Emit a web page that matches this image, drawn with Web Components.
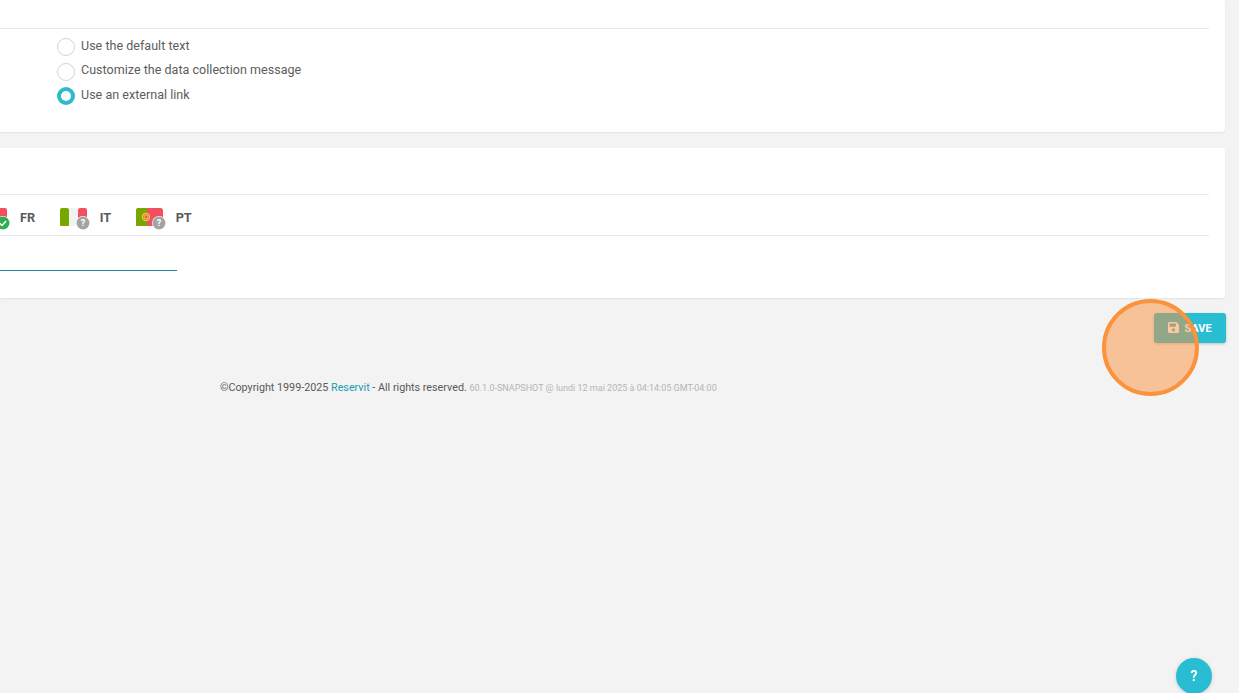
<!DOCTYPE html>
<html><head><meta charset="utf-8">
<style>
html,body{margin:0;padding:0;height:100%;overflow:hidden;background:#f3f3f3;font-family:Roboto,"Liberation Sans",sans-serif;color:#555}
</style></head><body>
<app-page>
  <app-card style="--h:132px;--pt:28px">
    <card-rule></card-rule>
    <radio-list>
      <radio-item>Use the default text</radio-item>
      <radio-item>Customize the data collection message</radio-item>
      <radio-item checked>Use an external link</radio-item>
    </radio-list>
  </app-card>
  <app-card style="--h:150px;--pt:46px;--mt:16px">
    <card-rule></card-rule>
    <lang-tabs>
      <lang-tab flag="fr" state="ok">FR</lang-tab>
      <lang-tab flag="it" state="q">IT</lang-tab>
      <lang-tab flag="pt" state="q">PT</lang-tab>
    </lang-tabs>
    <card-rule></card-rule>
    <url-field></url-field>
  </app-card>
  <save-bar></save-bar>
  <page-footer></page-footer>
</app-page>
<help-button></help-button>
<click-marker></click-marker>
<script>
function def(name, html, init){
  customElements.define(name, class extends HTMLElement{
    constructor(){super();this.attachShadow({mode:'open'}).innerHTML=html;}
    connectedCallback(){ if(init) init(this); }
  });
}
def('app-page',`<style>:host{display:block;width:1225px}</style><slot></slot>`);
def('app-card',`<style>:host{display:block;box-sizing:border-box;height:var(--h);margin-top:var(--mt,0);padding:var(--pt) 16px 0 0;background:#fff;border-radius:0 3px 3px 0;box-shadow:0 1px 2px rgba(0,0,0,.07)}</style><slot></slot>`);
def('card-rule',`<style>:host{display:block;height:1px;background:#e9e9e9}</style>`);
def('radio-list',`<style>:host{display:flex;flex-direction:column;padding:5px 0 0 57px}</style><slot></slot>`);
def('radio-item',`<style>:host{display:flex;align-items:flex-start;height:24.5px;font-size:12.5px;letter-spacing:.03px;color:#5c5c5c;line-height:24px}
.c{box-sizing:border-box;width:18px;height:18px;margin:4px 6px 0 0;border:1px solid #d4d4d4;border-radius:50%;background:#fff}
:host([checked]) .c{border:4px solid #2fb9cd;width:18px;height:18px}
span{display:block;margin-top:-.5px}</style><div class="c"></div><span><slot></slot></span>`);
def('lang-tabs',`<style>:host{display:flex;align-items:center;height:40px;margin-left:-20px;padding-top:5px;box-sizing:border-box}</style><slot></slot>`);
const flags={
 fr:`<rect width="9" height="18.5" fill="#3b5bb5"/><rect x="9" width="9" height="18.5" fill="#f4f4f4"/><rect x="18" width="9" height="18.5" rx="2" fill="#f0505f"/>`,
 it:`<rect width="9" height="18.5" rx="2" fill="#76a800"/><rect x="9" width="9" height="18.5" fill="#f2f2f2"/><rect x="18" width="9" height="18.5" rx="2" fill="#f0505f"/>`,
 pt:`<rect width="27" height="18.5" rx="2.5" fill="#f0505f"/><path d="M2.5 0h8.5v18.5H2.5A2.5 2.5 0 0 1 0 16V2.5A2.5 2.5 0 0 1 2.5 0z" fill="#76a800"/><circle cx="10" cy="9" r="4.2" fill="#e9c24a"/><circle cx="10" cy="9" r="2.6" fill="none" stroke="#d9772f" stroke-width=".8"/><circle cx="10" cy="9" r="1.3" fill="#f0505f"/>`
};
const badges={
 ok:`<circle cx="7" cy="7" r="6.5" fill="#2ead52"/><path d="M3.8 7.2l2.3 2.3 4-4.4" fill="none" stroke="#fff" stroke-width="1.5"/>`,
 q:`<circle cx="7" cy="7" r="6.5" fill="#a3a3a3"/><text x="7" y="10.2" text-anchor="middle" font-family="Roboto,sans-serif" font-size="9" font-weight="700" fill="#fff">?</text>`
};
def('lang-tab',`<style>:host{display:flex;align-items:center;margin-right:24.6px;font-size:12.7px;font-weight:700;color:#5a5a5a}
.f{position:relative;width:27px;height:18.5px;margin-right:13px;margin-top:-1px}
svg{display:block}
.b{position:absolute;right:-3px;bottom:-4px;width:14px;height:14px;background:#fff;border-radius:50%}
</style><div class="f"><svg class="fl" width="27" height="18.5" viewBox="0 0 27 18.5"></svg><svg class="b" width="14" height="14" viewBox="0 0 14 14"></svg></div><slot></slot>`,
el=>{
  el.shadowRoot.querySelector('.fl').innerHTML=flags[el.getAttribute('flag')];
  el.shadowRoot.querySelector('.b').innerHTML=badges[el.getAttribute('state')];
});
def('url-field',`<style>:host{display:block;width:177px;height:35px;box-sizing:border-box;border-bottom:1px solid #1c8aa1}</style>`);
def('save-bar',`<style>:host{display:flex;justify-content:flex-end;margin-top:15px;height:30px}</style><save-button></save-button>`);
def('save-button',`<style>:host{display:flex;align-items:center;justify-content:center;gap:5px;box-sizing:border-box;width:72px;height:30px;margin-right:-1px;background:#29bdd3;color:#fff;border-radius:3px;font-size:11px;font-weight:700;box-shadow:0 1px 3px rgba(0,0,0,.2)}
svg{display:block;margin-top:-2px}span{letter-spacing:.05px}</style><svg width="11" height="11" viewBox="0 0 448 448"><path fill="#fff" d="M433.9 97.9l-83.9-83.9A48 48 0 0 0 316.1 0H48A48 48 0 0 0 0 48v352a48 48 0 0 0 48 48h352a48 48 0 0 0 48-48V131.9a48 48 0 0 0-14.1-34zM224 384a64 64 0 1 1 0-128 64 64 0 0 1 0 128zm96-304.5V180a12 12 0 0 1-12 12H76a12 12 0 0 1-12-12V76a12 12 0 0 1 12-12h228.5a12 12 0 0 1 8.5 3.5l3.5 3.5a12 12 0 0 1 3.5 8.5z"/></svg><span>SAVE</span>`);
def('page-footer',`<style>:host{display:block;margin-top:38px;padding-left:220px;font-size:10.75px;line-height:14px;color:#5a5a5a;white-space:nowrap}
a{color:#1c9db3;text-decoration:none}small{font-size:9px;color:#b5b5b5}</style>©Copyright 1999-2025 <a>Reservit</a> - All rights reserved. <small>60.1.0-SNAPSHOT @ lundi 12 mai 2025 à 04:14:05 GMT-04:00</small>`);
def('help-button',`<style>:host{position:fixed;left:1176px;top:658px;width:36px;height:36px;border-radius:50%;background:#29bdd3;color:#fff;display:flex;align-items:center;justify-content:center;font-size:14px;font-weight:700;box-shadow:0 1px 4px rgba(0,0,0,.15)}</style>?`);
def('click-marker',`<style>:host{position:fixed;left:1102px;top:299px;box-sizing:border-box;width:97px;height:97px;border-radius:50%;border:4px solid #fb923c;background:rgba(251,146,60,.5)}</style>`);
</script>
</body></html>
